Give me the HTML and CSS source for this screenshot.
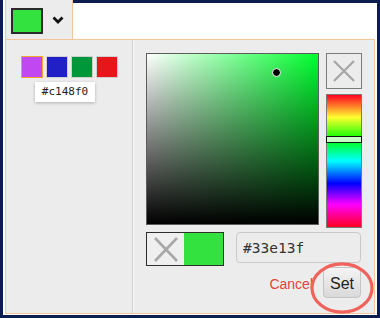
FILE: index.html
```html
<!DOCTYPE html>
<html lang="en">
<head>
    <meta charset="UTF-8">
    <title>Color Picker</title>
    <link rel="stylesheet" href="styles.css">
</head>
<body>
    <div class="frame">
        <div class="topbar">
            <button class="picker-btn">
                <span class="current-swatch"></span>
                <svg class="chevron" width="12" height="8" viewBox="0 0 12 8">
                    <polyline points="1.5,1.5 6,6 10.5,1.5" fill="none" stroke="#111" stroke-width="2.8"/>
                </svg>
            </button>
            <div class="topbar-rest"></div>
        </div>

        <div class="panel">
            <div class="palette">
                <div class="swatches">
                    <span class="swatch selected" style="background:#c148f0"></span>
                    <span class="swatch" style="background:#2020c6"></span>
                    <span class="swatch" style="background:#00973a"></span>
                    <span class="swatch" style="background:#e8161a"></span>
                </div>
                <div class="tooltip">#c148f0</div>
            </div>

            <div class="editor">
                <div class="editor-top">
                    <div class="sat-square">
                        <span class="sat-cursor"></span>
                    </div>
                    <div class="side">
                        <button class="clear-btn">
                            <svg width="22" height="22" viewBox="0 0 22 22">
                                <path d="M1 1 L21 21 M21 1 L1 21" stroke="#a6a6a6" stroke-width="2.2"/>
                            </svg>
                        </button>
                        <div class="hue-bar">
                            <span class="hue-marker"></span>
                        </div>
                    </div>
                </div>

                <div class="editor-bottom">
                    <div class="preview">
                        <div class="preview-none">
                            <svg width="24" height="25" viewBox="0 0 24 25">
                                <path d="M1 1 L23 24 M23 1 L1 24" stroke="#a8a8a8" stroke-width="2.6"/>
                            </svg>
                        </div>
                        <div class="preview-color"></div>
                    </div>
                    <input class="hex-input" type="text" value="#33e13f">
                </div>

                <div class="actions">
                    <a class="cancel" href="#">Cancel</a>
                    <div class="set-wrap">
                        <button class="set-btn">Set</button>
                        <svg class="highlight" width="64" height="52" viewBox="0 0 64 52">
                            <ellipse cx="32" cy="26" rx="30" ry="24.2" fill="none" stroke="#f2625c" stroke-width="3.2"/>
                        </svg>
                    </div>
                </div>
            </div>
        </div>
    </div>
</body>
</html>
```

FILE: styles.css
```css
* {
    margin: 0;
    padding: 0;
    box-sizing: border-box;
}

body {
    width: 380px;
    height: 318px;
    background-color: #0c1e4f;
    font-family: 'Liberation Sans', Arial, sans-serif;
    overflow: hidden;
}

.frame {
    margin: 3px 3px 0;
    height: 312px;
    background: white;
    padding: 0 2px 1px;
    display: flex;
    flex-direction: column;
}

.topbar {
    display: flex;
    height: 36px;
}

.picker-btn {
    width: 68px;
    height: 39px;
    margin-top: -3px;
    background: #ececec;
    border: none;
    border-left: 1px solid #f2c59b;
    border-right: 1px solid #f2c59b;
    box-shadow: -2px 0 0 #fff;
    display: flex;
    align-items: center;
    padding-left: 5px;
    gap: 9px;
}

.current-swatch {
    width: 32px;
    height: 26px;
    margin-top: 2px;
    background: #33e13f;
    border: 2px solid #2a2a2a;
}

.chevron {
    margin-top: 1px;
}

.topbar-rest {
    flex: 1;
}

.panel {
    flex: 1;
    display: flex;
    background: #ececec;
    border: 1px solid #f2c59b;
}

.palette {
    position: relative;
    width: 127px;
    padding-top: 16px;
    border-right: 1px solid #d2d2d2;
}

.swatches {
    display: flex;
    justify-content: center;
    gap: 3px;
}

.swatch {
    width: 22px;
    height: 22px;
    border: 1px solid #cfcfcf;
}

.swatch.selected {
    border-color: #f4a52e;
}

.tooltip {
    position: absolute;
    left: 29px;
    top: 42px;
    width: 60px;
    height: 20px;
    background: #fff;
    box-shadow: 0 1px 3px rgba(0, 0, 0, 0.25);
    font-family: 'DejaVu Sans Mono', monospace;
    font-size: 11px;
    color: #222;
    text-align: center;
    line-height: 20px;
}

.editor {
    flex: 1;
    border-left: 1px solid #f8f8f8;
    padding: 13px 0 0 12px;
}

.editor-top {
    display: flex;
    gap: 7px;
    height: 175px;
}

.sat-square {
    position: relative;
    width: 173px;
    height: 172px;
    border: 1px solid #5c5c5c;
    background:
        linear-gradient(to bottom, rgba(0, 0, 0, 0), #000),
        linear-gradient(to right, #fff, #00ff2e);
}

.sat-cursor {
    position: absolute;
    left: 125px;
    top: 14px;
    width: 9px;
    height: 9px;
    border-radius: 50%;
    background: #000;
    border: 1px solid #fff;
}

.side {
    display: flex;
    flex-direction: column;
    gap: 5px;
    width: 36px;
}

.clear-btn {
    width: 36px;
    height: 36px;
    background: #ececec;
    border: 1px solid #7a7a7a;
    display: flex;
    align-items: center;
    justify-content: center;
}

.hue-bar {
    position: relative;
    height: 134px;
    border: 1px solid #7a7a7a;
    background: linear-gradient(to bottom, #ff0020 0%, #ffff30 17%, #00ff00 33%, #00ffff 50%, #0000ff 67%, #ff00ff 83%, #ff0020 100%);
}

.hue-marker {
    position: absolute;
    left: -1px;
    right: -1px;
    top: 41px;
    height: 7px;
    background: #c6ffc6;
    border: 1px solid #111;
}

.editor-bottom {
    display: flex;
    align-items: flex-start;
    gap: 12px;
    margin-top: 4px;
}

.preview {
    display: flex;
    width: 78px;
    height: 34px;
    border: 1px solid #2e2e2e;
}

.preview-none {
    width: 37px;
    background: #efefef;
    display: flex;
    align-items: center;
    justify-content: center;
}

.preview-color {
    flex: 1;
    background: #33e13f;
}

.hex-input {
    width: 125px;
    height: 31px;
    background: #ececec;
    border: 1px solid #c9c9c9;
    border-radius: 4px;
    padding-left: 6px;
    font-family: 'DejaVu Sans Mono', monospace;
    font-size: 14.5px;
    color: #333;
    outline: none;
}

.actions {
    display: flex;
    justify-content: flex-end;
    align-items: center;
    gap: 10px;
    margin-top: 1px;
    padding-right: 13px;
}

.cancel {
    color: #e2413d;
    text-decoration: none;
    font-size: 14px;
    padding-top: 3px;
}

.set-wrap {
    position: relative;
}

.set-btn {
    width: 38px;
    height: 31px;
    border: 1px solid #c4c4c4;
    border-radius: 4px;
    background: linear-gradient(to bottom, #f4f4f4, #d9d9d9);
    font-family: 'Liberation Sans', Arial, sans-serif;
    font-size: 16px;
    color: #222;
    padding-top: 2px;
}

.highlight {
    position: absolute;
    left: -13px;
    top: -5px;
}
```
